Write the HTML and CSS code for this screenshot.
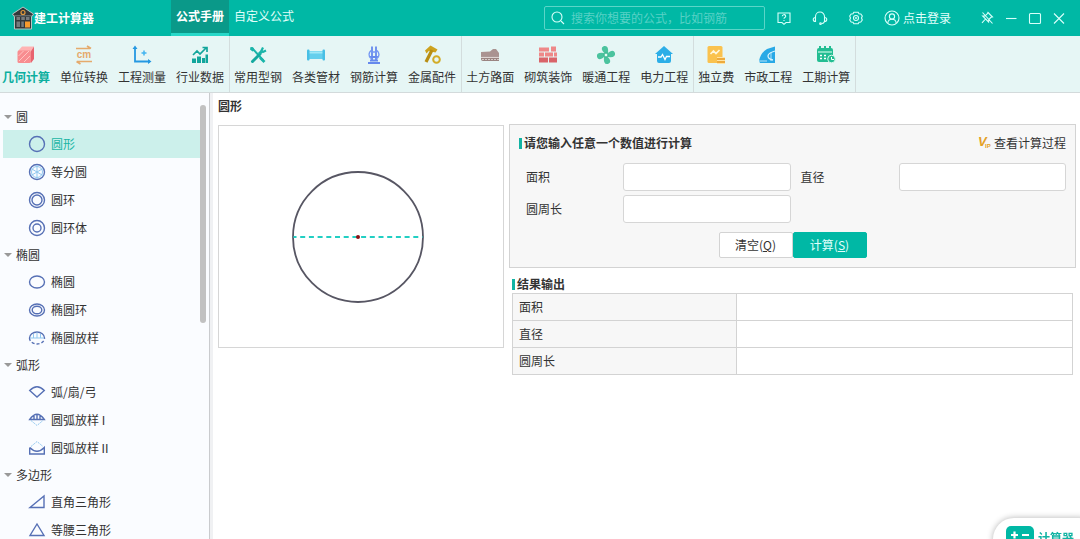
FILE: index.html
```html
<!DOCTYPE html>
<html lang="zh-CN">
<head>
  <meta charset="UTF-8">
  <meta name="viewport" content="width=device-width, initial-scale=1.0">
  <title>建工计算器</title>
  <link rel="stylesheet" href="styles.css">
</head>
<body>
  <header class="topbar">
    <h1 class="brand">
      <svg class="logo" viewBox="0 0 22 24" aria-hidden="true">
        <path d="M11 1 L21.500 8 L20 10.500 H19.500 V23 H2.500 V10.500 H2 L.5 8Z" fill="#33383b" stroke="#b9c4c2" stroke-width="1"/>
        <circle cx="11" cy="6.500" r="2" fill="none" stroke="#e39a3c" stroke-width="1.200"/>
        <path d="M4.500 11h3.500v3h-3.500zM9.300 11h3.500v3h-3.500zM14 11h3.500v3h-3.500zM4.500 15.500h3.500v5.500h-3.500zM9.300 15.500h2.500v5.500h-2.500z" fill="#767b7d"/>
        <path d="M13 15.500h5v6h-5z" fill="#f79a2c"/>
        <path d="M2 9.800h18" stroke="#8c9695" stroke-width=".8"/>
      </svg>
      建工计算器
    </h1>
    <nav class="tabs">
      <a class="tab active" href="#manual">公式手册</a>
      <a class="tab" href="#custom">自定义公式</a>
    </nav>
    <div class="search">
      <svg viewBox="0 0 16 16" aria-hidden="true"><circle cx="7" cy="7" r="5"/><path d="M11 11l3 3"/></svg>
      <input type="text" aria-label="搜索" placeholder="搜索你想要的公式，比如钢筋">
    </div>
    <div class="links">
      <button aria-label="帮助"><svg viewBox="0 0 16 16"><path d="M2 3h12v9.500H10l-2 1.800-2-1.800H2z"/><path d="M6.300 6.200a1.700 1.500 0 1 1 2.500 1.300q-.8.400-.8 1.200M8 10v1"/></svg></button>
      <button aria-label="客服"><svg viewBox="0 0 16 16"><path d="M3.500 7.500V6.500a4.500 4.500 0 0 1 9 0v1M3.500 7.500c-3 0-3 4 0 4zM12.500 7.500c3 0 3 4 0 4zM12.500 11.500q-.5 2-3 2.200"/><circle cx="8.500" cy="13.700" r=".8"/></svg></button>
      <button aria-label="设置"><svg viewBox="0 0 16 16"><path d="M5.800 2.200h4.400l.8 1.500 1.800.3 1.500 2-.8 2 .8 2-1.500 2-1.800.3-.8 1.500H5.800L5 12.300 3.200 12l-1.500-2 .8-2-.8-2 1.500-2L5 3.700z"/><circle cx="8" cy="8" r="2.500"/><circle cx="8" cy="8" r=".4"/></svg></button>
      <button class="login"><svg viewBox="0 0 16 16"><circle cx="8" cy="8" r="7"/><circle cx="8" cy="6.500" r="2.600"/><path d="M3.800 13q.4-3.800 4.200-3.800t4.200 3.800"/></svg>点击登录</button>
    </div>
    <div class="window-buttons">
      <button aria-label="置顶"><svg viewBox="0 0 16 16"><path d="M9 2.500l4.500 4.500-1.500.3-2.200 2.200-.2 2.500-6-6 2.500-.2 2.300-2.200zM6.500 9L3 12.800M3.500 2.500l10 11"/></svg></button>
      <button aria-label="最小化"><svg viewBox="0 0 16 16"><path d="M3 8.500h10.500"/></svg></button>
      <button aria-label="最大化"><svg viewBox="0 0 16 16"><rect x="2.500" y="3.500" width="11" height="10" rx="1"/></svg></button>
      <button aria-label="关闭"><svg viewBox="0 0 16 16"><path d="M3 3.500l10 10M13 3.500l-10 10"/></svg></button>
    </div>
  </header>

  <nav class="toolbar">
    <div class="tool-group">
      <a class="tool active" href="#geometry">
        <svg viewBox="0 0 22 22"><path d="M3 7l4-4.500h12L16 7z" fill="#ffb3b3"/><path d="M16 7l3-4.500V15l-3 4z" fill="#e86470"/><rect x="2.500" y="6.500" width="13.500" height="12.500" rx="1.500" fill="#f88d90"/><path d="M3.500 12l5-5M4 17l10-10M9 18l6-6" stroke="#ffc5c2"/></svg>
        几何计算</a>
      <a class="tool" href="#units">
        <svg viewBox="0 0 22 22"><path d="M3 4.500h14M14 2l4 2.500M19 17.500H4M7.500 20l-4-2.500" fill="none" stroke="#e5aa6c" stroke-width="1.700"/><text x="11" y="14" text-anchor="middle" class="cm">cm</text></svg>
        单位转换</a>
      <a class="tool" href="#survey">
        <svg viewBox="0 0 22 22"><path d="M4 3v14.500h15" fill="none" stroke="#2598e2" stroke-width="1.800"/><path d="M1.500 5L4 1.500 6.500 5zM17 15l3.500 2.500L17 20z" fill="#2598e2"/><path d="M13 6.500v5M10.500 9h5" stroke="#42b4f0" stroke-width="1.500"/></svg>
        工程测量</a>
      <a class="tool" href="#industry">
        <svg viewBox="0 0 22 22"><path d="M3 14.500h4V19H3zM8 12.500h4V19H8zM13 14h3v5h-3zM16.500 10.500h2.500V19h-2.500z" fill="#12a69c"/><path d="M4 11l4-4 3 3 6-6M13.500 3.500H18V8" fill="none" stroke="#12a69c" stroke-width="1.700"/></svg>
        行业数据</a>
    </div>
    <div class="tool-group">
      <a class="tool" href="#steel">
        <svg viewBox="0 0 22 22"><path d="M5 4l11 12" stroke="#19b5a9" stroke-width="2" stroke-linecap="round"/><path d="M3.500 3l3 .8 1 2.700-2 1-2.500-2zM14 13l4.500 4-2 2-4.500-4.500z" fill="#19b5a9"/><path d="M13 10l-7.500 7.500" stroke="#14a99f" stroke-width="3" stroke-linecap="round"/><path d="M16 3.500l-1.500 3 1.500 1.500 3-1.500" fill="none" stroke="#19b5a9" stroke-width="2.200"/><path d="M12 10l2.500-2.500" stroke="#19b5a9" stroke-width="3"/></svg>
        常用型钢</a>
      <a class="tool" href="#pipes">
        <svg viewBox="0 0 22 22"><rect x="4" y="7" width="14" height="8" fill="#65cfed"/><path d="M4 8.500h14" stroke="#a1e8f7" stroke-width="2"/><rect x="2" y="5.500" width="2.500" height="11" rx="1" fill="#48bfe5"/><rect x="17.500" y="5.500" width="2.500" height="11" rx="1" fill="#48bfe5"/></svg>
        各类管材</a>
      <a class="tool" href="#rebar">
        <svg viewBox="0 0 22 22"><path d="M9 2.500v15M13 2.500v15M5 19h12M7 16.500h8M7 13h8" fill="none" stroke="#6689ed" stroke-width="1.800"/><path d="M8 6.500q-4 4 0 8M14 6.500q4 4 0 8M8 8h6" fill="none" stroke="#7598f3" stroke-width="1.400"/></svg>
        钢筋计算</a>
      <a class="tool" href="#parts">
        <svg viewBox="0 0 22 22"><path d="M4 6.500l5.500-5 7 4-2 3-3.500-.8-3-1-2.500 2.800z" fill="#cda21e"/><path d="M11 6L5 18" stroke="#b88e14" stroke-width="3.200"/><circle cx="15.500" cy="15.500" r="3.300" fill="none" stroke="#d2ac28" stroke-width="2"/></svg>
        金属配件</a>
    </div>
    <div class="tool-group">
      <a class="tool" href="#road">
        <svg viewBox="0 0 22 22"><path d="M2 8l9-.5 3-2.500h3l3 4v4H2z" fill="#aa9391"/><path d="M2 12h18v5H4q-2 0-2-2z" fill="#9b8582"/><path d="M2 13.300h18" stroke="#f0e9e8"/><path d="M3 15.500h17" stroke="#d5cac8" stroke-dasharray="2 1"/></svg>
        土方路面</a>
      <a class="tool" href="#masonry">
        <svg viewBox="0 0 22 22"><path d="M2 3.500h10v4H2zM14 2.500h5v5h-5zM2 8.500h5v4H2zM8 8.500h8v4H8zM17 8.500h3v4h-3z" fill="#ee8888"/><path d="M2 13.500h9v5H2zM12 13.500h8v5h-8z" fill="#d96469"/></svg>
        砌筑装饰</a>
      <a class="tool" href="#hvac">
        <svg viewBox="0 0 22 22"><g fill="#4bc39e"><path d="M10 10Q4 4 9 2q5-1 4 7z"/><path d="M12 10q6-6 8-1 1 5-7 4z"/><path d="M12 12q6 6 1 8-5 1-4-7z"/><path d="M10 12q-6 6-8 1-1-5 7-4z"/></g><circle cx="11" cy="11" r="2" fill="#e7fff6" stroke="#32b18a"/></svg>
        暖通工程</a>
      <a class="tool" href="#power">
        <svg viewBox="0 0 22 22"><path d="M11 2l9 8h-2v7q0 2-2 2H6q-2 0-2-2v-7H2z" fill="#2caee7"/><path d="M5 13h3l1.500-2.500 2.500 5 1.500-3H17" fill="none" stroke="#fff" stroke-width="1.300"/></svg>
        电力工程</a>
    </div>
    <div class="tool-group">
      <a class="tool" href="#fees">
        <svg viewBox="0 0 22 22"><rect x="2.500" y="2" width="15" height="17" rx="1.500" fill="#fac24e"/><path d="M5.500 10l3-3 2.500 2.500 3.500-3.500" fill="none" stroke="#fff7dc" stroke-width="1.700"/><path d="M12 13h8v7h-8z" fill="#edab3e"/><path d="M12 13.500h8M12 16.500h8M12 19.500h8" stroke="#ffe4a4" stroke-width="1.200"/></svg>
        独立费</a>
      <a class="tool" href="#municipal">
        <svg viewBox="0 0 22 22"><path d="M2 17Q4 8 10 5l8-2.500V19H3z" fill="#28a9e6"/><path d="M18 7q-7 2-7 5t5 4" fill="none" stroke="#d8f3fc" stroke-width="1.300"/><path d="M14 8v9M2 17h8" stroke="#d8f3fc" stroke-width=".8"/></svg>
        市政工程</a>
      <a class="tool" href="#duration">
        <svg viewBox="0 0 22 22"><rect x="2" y="4" width="16" height="14" rx="2" fill="#22bd92"/><path d="M3 8h14" stroke="#b9f3df" stroke-width="1.300"/><path d="M5 2v4M10 2v4M15 2v4" stroke="#22bd92" stroke-width="2"/><path d="M5 11.500h8M5 14.500h6" stroke="#fff" stroke-width="1.500" stroke-dasharray="2 2"/><circle cx="16.500" cy="15" r="3.800" fill="#22bd92" stroke="#d7faed"/><path d="M16.500 13v2.500H19" fill="none" stroke="#fff"/></svg>
        工期计算</a>
    </div>
  </nav>

  <div class="workspace">
    <aside class="sidebar">
      <nav class="tree">
        <h2>圆</h2>
        <ul>
          <li><a class="active" href="#c1"><svg viewBox="0 0 16 16"><circle cx="8" cy="8" r="7.500"/></svg>圆形</a></li>
          <li><a href="#c2"><svg viewBox="0 0 16 16"><circle cx="8" cy="8" r="7.500"/><path class="light" d="M8 1v14M2 4.500l12 7M2 11.500l12-7"/><circle class="light" cx="8" cy="8" r="5.500"/></svg>等分圆</a></li>
          <li><a href="#c3"><svg viewBox="0 0 16 16"><circle cx="8" cy="8" r="7.500"/><circle cx="8" cy="8" r="5"/></svg>圆环</a></li>
          <li><a href="#c4"><svg viewBox="0 0 16 16"><circle cx="8" cy="8" r="7.500"/><circle cx="8" cy="8" r="4"/></svg>圆环体</a></li>
        </ul>
        <h2>椭圆</h2>
        <ul>
          <li><a href="#e1"><svg viewBox="0 0 16 16"><ellipse cx="8" cy="8" rx="7.500" ry="6"/></svg>椭圆</a></li>
          <li><a href="#e2"><svg viewBox="0 0 16 16"><ellipse cx="8" cy="8" rx="7.500" ry="6"/><ellipse cx="8" cy="8" rx="4.800" ry="3.800"/></svg>椭圆环</a></li>
          <li><a href="#e3"><svg viewBox="0 0 16 16"><path d="M.5 8a7.500 6 0 0 1 15 0"/><path d="M.5 8a7.500 6 0 0 0 15 0" stroke-dasharray="3 2"/><path class="light" d="M1 8h14M4.500 4v4M8 2.500v5.500M11.500 4v4"/></svg>椭圆放样</a></li>
        </ul>
        <h2>弧形</h2>
        <ul>
          <li><a href="#a1"><svg viewBox="0 0 16 16"><path d="M.7 6.500Q8-1 15.300 6.500L8 13z"/></svg>弧/扇/弓</a></li>
          <li><a href="#a2"><svg viewBox="0 0 16 16"><path d="M.7 7.500Q8-3 15.300 7.500zM5 4v3.500M8 2.500v5M11 4v3.500"/><path class="light" d="M2 8.500l6 5 6-5" stroke-dasharray="2 1"/></svg>圆弧放样 I</a></li>
          <li><a href="#a3"><svg viewBox="0 0 16 16"><path d="M.7 7.500V14h14.600V7.500Q8 15 .7 7.500"/><path class="light" d="M2 6.500l6-5 6 5" stroke-dasharray="2 1"/></svg>圆弧放样Ⅱ</a></li>
        </ul>
        <h2>多边形</h2>
        <ul>
          <li><a href="#p1"><svg viewBox="0 0 16 16"><path d="M1 13.500h14V2z"/></svg>直角三角形</a></li>
          <li><a href="#p2"><svg viewBox="0 0 16 16"><path d="M8 2L15 13.500H1z"/></svg>等腰三角形</a></li>
        </ul>
      </nav>
      <div class="scrollbar"></div>
    </aside>

    <main class="content">
      <h2 class="page-title">圆形</h2>
      <div class="columns">
        <div class="figure">
          <svg viewBox="0 0 284 221" role="img" aria-label="圆形">
            <circle cx="139" cy="111" r="65" fill="none" stroke="#575663" stroke-width="1.800"/>
            <path d="M74.500 111h129" stroke="#22cfc3" stroke-width="2" stroke-dasharray="5 3.700" stroke-dashoffset="2"/>
            <circle cx="139" cy="111" r="2" fill="#8a1116"/>
          </svg>
        </div>
        <div class="panels">
          <form class="form-panel">
            <div class="form-head">
              <h3 class="section-title">请您输入任意一个数值进行计算</h3>
              <a class="process" href="#process"><svg viewBox="0 0 14 14" aria-hidden="true"><text x="0" y="10" class="vip-v">V</text><text x="7" y="12" class="vip-ip">IP</text></svg>查看计算过程</a>
            </div>
            <div class="fields">
              <label for="area">面积</label>
              <input type="text" id="area">
              <label for="diameter">直径</label>
              <input type="text" id="diameter">
              <label for="perimeter">圆周长</label>
              <input type="text" id="perimeter">
            </div>
            <div class="actions">
              <button type="reset">清空(<u>Q</u>)</button>
              <button type="button" class="primary">计算(<u>S</u>)</button>
            </div>
          </form>
          <section class="results">
            <h3 class="section-title">结果输出</h3>
            <table>
              <tr><th scope="row">面积</th><td></td></tr>
              <tr><th scope="row">直径</th><td></td></tr>
              <tr><th scope="row">圆周长</th><td></td></tr>
            </table>
          </section>
        </div>
      </div>
    </main>
  </div>

  <button class="calculator">
    <svg viewBox="0 0 28 28" aria-hidden="true"><rect width="28" height="28" rx="5" fill="#00b8a5"/><path d="M5 9h7M8.500 5.500v7M16 9h7M6 18l5 5M11 18l-5 5M16 19h7M16 22h7" stroke="#fff" stroke-width="2.200"/></svg>
    计算器
  </button>
</body>
</html>
```
FILE: styles.css
```css
* {
  box-sizing: border-box;
}

body {
  display: flex;
  flex-direction: column;
  height: 100vh;
  margin: 0;
  overflow: hidden;
  font-family: "Noto Sans CJK SC", sans-serif;
  font-size: 12px;
  line-height: 18px;
  color: #333;
  background: #fff;
}

h1, h2, h3, ul {
  margin: 0;
  padding: 0;
  font-size: 12px;
}

a {
  color: inherit;
  text-decoration: none;
}

button, input {
  font: inherit;
  color: inherit;
}

svg {
  display: block;
  flex: none;
}

/* Top bar */
.topbar {
  display: flex;
  flex: none;
  align-items: center;
  height: 36px;
  padding-right: 13px;
  color: #fff;
  background: #00b8a5;
}

.brand {
  display: flex;
  align-items: center;
  width: 171px;
  padding-left: 12px;
}

.logo {
  width: 22px;
  height: 24px;
}

.tabs {
  display: flex;
  align-self: stretch;
}

.tab {
  padding: 7px 5px 9px;
  color: #e1fffb;
}

.tab.active {
  padding-bottom: 8px;
  font-weight: bold;
  color: #fff;
  background: #0a9989;
  border-bottom: 3px solid #27d8c8;
}

.search {
  display: flex;
  align-items: center;
  gap: 5px;
  width: 221px;
  height: 24px;
  margin-left: auto;
  padding: 0 5px;
  border: 1px solid #5bd5c8;
  border-radius: 2px;
}

.search svg, .topbar button svg {
  width: 16px;
  height: 16px;
  fill: none;
  stroke: #d8fffa;
  stroke-width: 1.1;
}

.search input {
  flex: 1;
  min-width: 0;
  padding: 0;
  background: none;
  border: 0;
  outline: none;
}

.search input::placeholder {
  color: #58d1c5;
}

.topbar button {
  display: flex;
  align-items: center;
  gap: 3px;
  padding: 0;
  color: #e1fffb;
  background: none;
  border: 0;
}

.links {
  display: flex;
  gap: 20px;
  margin-left: 11px;
}

.window-buttons {
  display: flex;
  gap: 8px;
  margin-left: 28px;
}

/* Toolbar */
.toolbar {
  display: flex;
  flex: none;
  height: 57px;
  background: #e6f6f5;
  border-bottom: 1px solid #d3dadb;
}

.tool-group {
  display: flex;
  box-shadow: 1px 0 #d3dddd;
}

.tool {
  display: flex;
  flex-direction: column;
  align-items: center;
  gap: 2px;
  padding: 8px 5px 0;
}

.tool-group:first-child .tool:first-child {
  padding-left: 2px;
}

.tool.active {
  font-weight: bold;
  color: #0caf9f;
}

.tool svg {
  width: 22px;
  height: 22px;
}

.cm {
  font: bold 10px "Liberation Sans", sans-serif;
  fill: #e5aa6c;
}

/* Sidebar */
.workspace {
  display: flex;
  flex: 1;
  min-height: 0;
}

.sidebar {
  display: flex;
  flex: none;
  width: 213px;
  padding: 11px 4px 0 3px;
  overflow: hidden;
  background: #fafcff;
  border-right: 3px solid #f0f1f3;
  box-shadow: inset -1px 0 #c9cbce;
}

.tree {
  flex: 1;
}

.tree h2 {
  display: flex;
  align-items: center;
  gap: 4px;
  height: 26px;
  padding-left: 1px;
  font-weight: normal;
}

.tree h2::before {
  content: "";
  border: 4px solid transparent;
  border-top-color: #999;
  border-bottom: 0;
}

.tree ul {
  list-style: none;
}

.tree a {
  display: flex;
  align-items: center;
  gap: 6px;
  height: 28px;
  padding-left: 26px;
}

.tree a.active {
  color: #18b5a5;
  background: #ccf0eb;
}

.tree svg {
  width: 16px;
  height: 16px;
  overflow: visible;
  fill: none;
  stroke: #5670b5;
  stroke-width: 1.4;
}

.tree .light {
  stroke: #91c8ef;
  stroke-width: 1;
}

.scrollbar {
  width: 6px;
  height: 50%;
  margin-top: 1px;
  background: #c1c1c1;
  border-radius: 3px;
}

/* Content */
.content {
  flex: 1;
  min-width: 0;
  padding: 4px 4px 0 5px;
}

.page-title {
  margin-bottom: 9px;
}

.columns {
  display: flex;
  align-items: flex-start;
  gap: 5px;
}

.figure {
  width: 286px;
  margin-top: 1px;
  border: 1px solid #d6d6d6;
}

.panels {
  flex: 1;
}

.form-panel {
  padding: 9px;
  background: #f7f7f7;
  border: 1px solid #d3d3d3;
}

.form-head {
  display: flex;
  justify-content: space-between;
}

.section-title {
  display: flex;
  align-items: center;
  gap: 2px;
}

.section-title::before {
  content: "";
  width: 3px;
  height: 11px;
  background: #12b3a3;
}

.process {
  display: flex;
  align-items: center;
  gap: 2px;
}

.process svg {
  width: 14px;
  height: 14px;
  overflow: visible;
}

.vip-v {
  font: italic bold 13px "Liberation Sans", sans-serif;
  fill: #e3a026;
}

.vip-ip {
  font: bold 6px "Liberation Sans", sans-serif;
  fill: #e3a026;
}

.fields {
  display: grid;
  grid-template-columns: 87px 1fr 88px 1fr;
  gap: 4px 10px;
  align-items: center;
  margin-top: 11px;
  padding-left: 7px;
}

.fields input {
  width: 100%;
  height: 28px;
  padding: 0 6px;
  background: #fff;
  border: 1px solid #d6d6d6;
  border-radius: 3px;
}

.actions {
  display: flex;
  justify-content: center;
  margin-top: 9px;
}

.actions button {
  width: 74px;
  height: 26px;
  padding: 0;
  background: #fff;
  border: 1px solid #d3d3d3;
  border-radius: 2px;
}

.actions .primary {
  color: #e1fffb;
  background: #00b8a5;
  border-color: #00b8a5;
}

.results {
  padding: 7px 3px 0 3px;
}

.results table {
  width: 100%;
  border-collapse: collapse;
}

.results th, .results td {
  height: 27px;
  padding: 0 6px;
  border: 1px solid #d3d3d3;
}

.results th {
  width: 40%;
  font-weight: normal;
  text-align: left;
  background: #f7f7f7;
}

/* Calculator tab tucked into the corner of the window */
.calculator {
  position: fixed;
  right: -20px;
  bottom: -21px;
  display: flex;
  gap: 4px;
  padding: 8px 26px 6px 13px;
  font-weight: bold;
  line-height: 24px;
  color: #12b3a3;
  background: #fff;
  border: 0;
  border-radius: 24px;
  box-shadow: 0 0 6px rgba(0, 0, 0, 0.3);
}

.calculator svg {
  width: 28px;
  height: 28px;
}
```
